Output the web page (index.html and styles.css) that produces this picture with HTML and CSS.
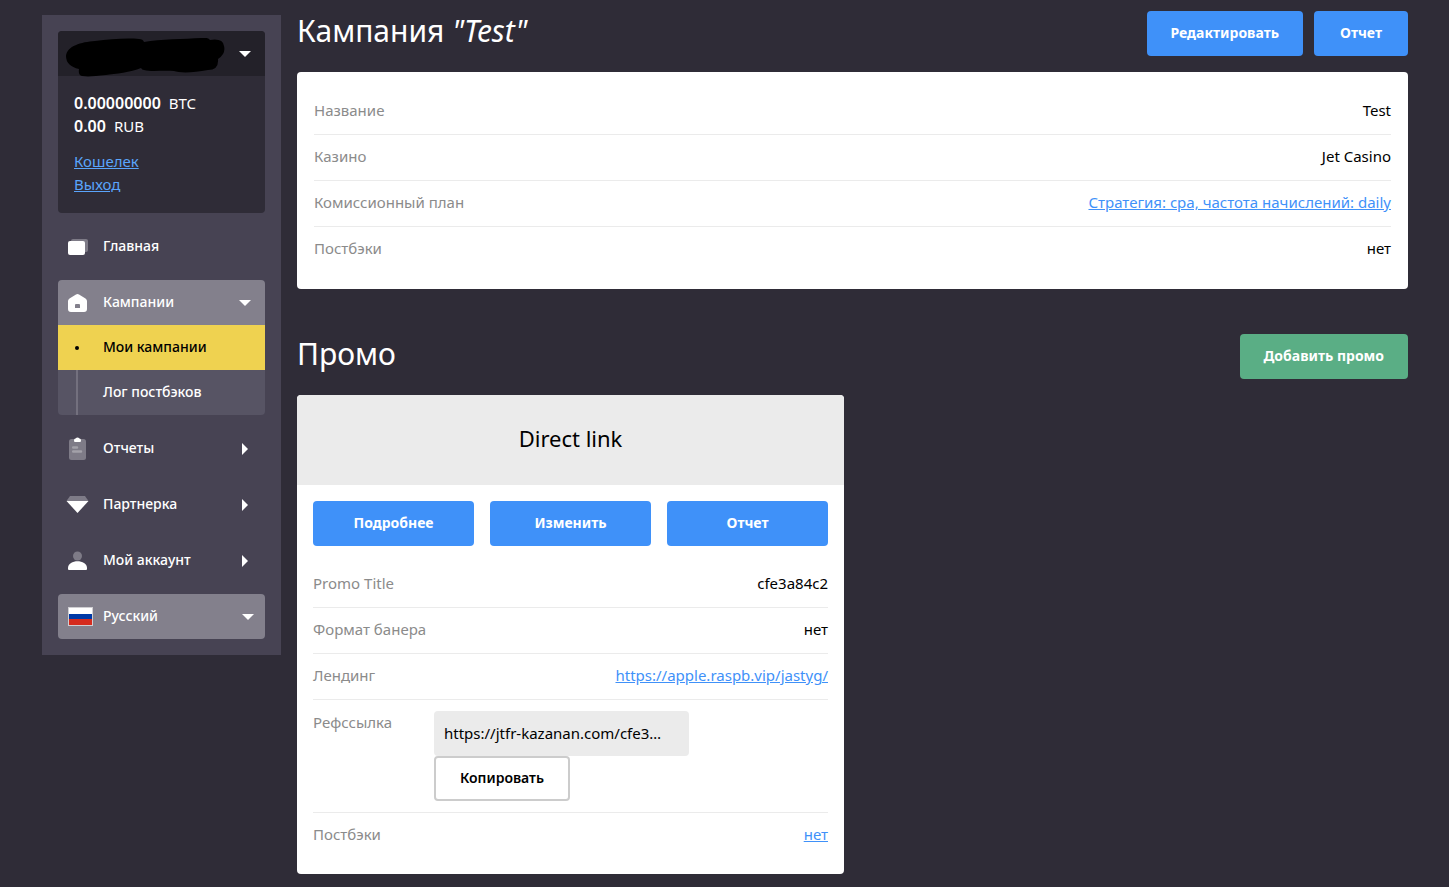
FILE: index.html
```html
<!DOCTYPE html>
<html lang="ru">
<head>
<meta charset="utf-8">
<meta name="viewport" content="width=device-width, initial-scale=1">
<title>Кампания "Test"</title>
<link rel="stylesheet" href="styles.css">
</head>
<body>
<div class="page">
  <aside class="sidebar">
    <section class="account">
      <button class="account-toggle" type="button" aria-label="Аккаунт">
        <svg class="account-mask" width="162" height="40" viewBox="0 0 162 40" aria-hidden="true"><path d="M1 18C2 8 16 4 30 3C45 1 62 0 74 1Q78 1 79 4C95 1 120 1 136 0Q143 -1 145 2Q158 0 159 8Q161 16 153 21Q154 32 143 32C128 35 114 35 109 33C98 32 87 34 79 32Q77 32 76 30C66 34 50 36 41 37C30 38 24 39 17 38Q13 37 14 31Q1 28 1 18Z" fill="#000"/></svg>
        <svg class="caret" width="12" height="6" viewBox="0 0 12 6" aria-hidden="true"><path d="M0 0H12L6 6Z" fill="currentColor"/></svg>
      </button>
      <div class="account-body">
        <p class="balance"><b>0.00000000</b><span>BTC</span></p>
        <p class="balance"><b>0.00</b><span>RUB</span></p>
        <div class="account-links">
          <a href="#wallet">Кошелек</a>
          <a href="#logout">Выход</a>
        </div>
      </div>
    </section>
    <nav class="menu">
      <a class="menu-item" href="#home">
        <svg class="icon" width="24" height="24" viewBox="0 0 24 24" aria-hidden="true"><rect x="5" y="4" width="17" height="13" rx="2" fill="#7e7b87"/><rect x="2" y="6" width="17" height="14" rx="2" fill="#fff"/></svg>
        <span>Главная</span>
      </a>
      <div class="menu-group">
        <button class="menu-item is-open" type="button">
          <svg class="icon" width="24" height="24" viewBox="0 0 24 24" aria-hidden="true"><path fill-rule="evenodd" d="M10 3.600Q11.500 2.600 13 3.600L19.500 7.500Q21 8.500 21 10V18Q21 21 18 21H5Q2 21 2 18V10Q2 8.500 3.500 7.500ZM9 14V17H14V14Q14 13 13 13H10Q9 13 9 14Z" fill="#fff"/></svg>
          <span>Кампании</span>
          <svg class="caret" width="12" height="6" viewBox="0 0 12 6" aria-hidden="true"><path d="M0 0H12L6 6Z" fill="currentColor"/></svg>
        </button>
        <a class="sub-item is-current" href="#campaigns"><span>Мои кампании</span></a>
        <a class="sub-item" href="#log"><span>Лог постбэков</span></a>
      </div>
      <button class="menu-item" type="button">
        <svg class="icon" width="24" height="24" viewBox="0 0 24 24" aria-hidden="true"><rect x="3" y="2" width="17" height="21" rx="2.500" fill="#7e7b87"/><path d="M8 3.500Q8 1.500 9.500 1.500Q11.500 -.5 13.500 1.500Q15 1.500 15 3.500Q15 5 14 5H9Q8 5 8 3.500Z" fill="#fff"/><path d="M7.200 10.500H11M7.200 14.500H15" stroke="#a3a1a9" stroke-width="2.500" stroke-linecap="round"/></svg>
        <span>Отчеты</span>
        <svg class="caret" width="6" height="12" viewBox="0 0 6 12" aria-hidden="true"><path d="M0 0L6 6L0 12Z" fill="currentColor"/></svg>
      </button>
      <button class="menu-item" type="button">
        <svg class="icon" width="24" height="24" viewBox="0 0 24 24" aria-hidden="true"><path d="M4 3H19L22.500 8H.5Z" fill="#7e7b87"/><path d="M.5 8H22.500L11.500 20Z" fill="#fff"/></svg>
        <span>Партнерка</span>
        <svg class="caret" width="6" height="12" viewBox="0 0 6 12" aria-hidden="true"><path d="M0 0L6 6L0 12Z" fill="currentColor"/></svg>
      </button>
      <button class="menu-item" type="button">
        <svg class="icon" width="24" height="24" viewBox="0 0 24 24" aria-hidden="true"><circle cx="11.500" cy="7" r="4.500" fill="#7e7b87"/><path d="M2 20V19C2 10 21 10 21 19V20Q21 21 20 21H3Q2 21 2 20Z" fill="#fff"/></svg>
        <span>Мой аккаунт</span>
        <svg class="caret" width="6" height="12" viewBox="0 0 6 12" aria-hidden="true"><path d="M0 0L6 6L0 12Z" fill="currentColor"/></svg>
      </button>
      <button class="menu-item is-open language" type="button">
        <svg class="flag" width="25" height="19" viewBox="0 0 25 19" aria-hidden="true"><rect width="25" height="19" fill="#cfced2"/><rect x="1" y="1" width="23" height="6" fill="#fff"/><rect x="1" y="7" width="23" height="5" fill="#0039a6"/><rect x="1" y="12" width="23" height="6" fill="#d52b1e"/></svg>
        <span>Русский</span>
        <svg class="caret" width="12" height="6" viewBox="0 0 12 6" aria-hidden="true"><path d="M0 0H12L6 6Z" fill="currentColor"/></svg>
      </button>
    </nav>
  </aside>

  <main class="content">
    <header class="section-head">
      <h1 class="title">Кампания <em>"Test"</em></h1>
      <div class="actions">
        <button class="button" type="button">Редактировать</button>
        <button class="button" type="button">Отчет</button>
      </div>
    </header>
    <dl class="card details">
      <div class="row"><dt>Название</dt><dd>Test</dd></div>
      <div class="row"><dt>Казино</dt><dd>Jet Casino</dd></div>
      <div class="row"><dt>Комиссионный план</dt><dd><a href="#plan">Стратегия: cpa, частота начислений: daily</a></dd></div>
      <div class="row"><dt>Постбэки</dt><dd>нет</dd></div>
    </dl>

    <header class="section-head promo-head">
      <h2 class="title">Промо</h2>
      <button class="button button-green" type="button">Добавить промо</button>
    </header>
    <div class="promo-grid">
      <article class="card">
        <h3 class="promo-title">Direct link</h3>
        <div class="promo-body">
          <div class="promo-actions">
            <button class="button" type="button">Подробнее</button>
            <button class="button" type="button">Изменить</button>
            <button class="button" type="button">Отчет</button>
          </div>
          <dl class="promo-details">
            <div class="row"><dt>Promo Title</dt><dd>cfe3a84c2</dd></div>
            <div class="row"><dt>Формат банера</dt><dd>нет</dd></div>
            <div class="row"><dt>Лендинг</dt><dd><a href="#landing">https://apple.raspb.vip/jastyg/</a></dd></div>
            <div class="row row-ref">
              <dt><label for="ref">Рефссылка</label></dt>
              <dd>
                <input class="ref-link" id="ref" type="text" readonly value="https://jtfr-kazanan.com/cfe3…">
                <button class="button button-outline" type="button">Копировать</button>
              </dd>
            </div>
            <div class="row"><dt>Постбэки</dt><dd><a href="#postbacks">нет</a></dd></div>
          </dl>
        </div>
      </article>
    </div>
  </main>
</div>
</body>
</html>
```
FILE: styles.css
```css
* {
  box-sizing: border-box;
}

body {
  margin: 0;
  background: #2f2c37;
  color: #000;
  font-family: "Noto Sans", "Open Sans", sans-serif;
  font-size: 15px;
  line-height: 23px;
}

h1, h2, h3, p, dl, dd {
  margin: 0;
}

button, input {
  font: inherit;
}

button {
  border: 0;
  cursor: pointer;
}

.page {
  display: grid;
  grid-template-columns: 239px minmax(0, 1fr);
  align-items: start;
  gap: 16px;
  padding: 11px 41px 13px 42px;
}

/* Sidebar */

.sidebar {
  margin-top: 4px;
  padding: 16px;
  background: #474353;
}

.account {
  border-radius: 4px;
  background: #2f2c37;
  color: #fff;
}

.account-toggle {
  position: relative;
  display: flex;
  align-items: center;
  justify-content: flex-end;
  width: 100%;
  height: 45px;
  padding: 0 14px;
  border-radius: 4px 4px 0 0;
  background: #232129;
  color: #fff;
}

.account-mask {
  position: absolute;
  top: 7px;
  left: 7px;
}

.account-body {
  padding: 16px 16px 17px;
}

.balance {
  display: flex;
  gap: 8px;
}

.balance b {
  font-weight: 600;
  font-size: 16px;
}

.account-links {
  display: flex;
  flex-direction: column;
  align-items: flex-start;
  margin-top: 12px;
}

.account-links a {
  color: #5aa5fc;
}

.menu {
  display: flex;
  flex-direction: column;
  gap: 11px;
  margin-top: 11px;
}

.menu-item {
  display: flex;
  align-items: center;
  width: 100%;
  height: 45px;
  padding: 0 14px 0 8px;
  border-radius: 4px;
  background: transparent;
  color: #fff;
  font-size: 14px;
  font-weight: 500;
  text-align: left;
  text-decoration: none;
}

.menu-item span,
.sub-item span {
  padding-bottom: 2px;
}

.menu-item .caret {
  margin-left: auto;
}

.menu-item:not(.is-open) .caret {
  margin-right: 3px;
}

.icon {
  width: 24px;
  margin-right: 13px;
}

.is-open {
  background: #83808c;
}

.menu-group .menu-item {
  border-radius: 4px 4px 0 0;
}

.menu-item.language {
  padding: 0 11px 0 10px;
}

.flag {
  margin-right: 10px;
}

.sub-item {
  display: flex;
  align-items: center;
  height: 45px;
  background: #575464;
  color: #fff;
  font-size: 14px;
  font-weight: 500;
  text-decoration: none;
}

.sub-item::before {
  content: "";
  width: 2px;
  height: 45px;
  margin: 0 25px 0 18px;
  background: #73707e;
}

.sub-item:last-child {
  border-radius: 0 0 4px 4px;
}

.is-current {
  background: #efd250;
  color: #000;
}

.is-current::before {
  width: 4px;
  height: 4px;
  margin: 0 24px 0 17px;
  border-radius: 50%;
  background: #000;
}

/* Content */

.section-head {
  display: flex;
  align-items: flex-start;
  justify-content: space-between;
  min-height: 45px;
  margin-bottom: 16px;
}

.promo-head {
  margin-top: 45px;
}

.title {
  color: #fff;
  font-size: 30px;
  font-weight: 400;
  line-height: 40px;
}

.actions {
  display: flex;
  gap: 11px;
}

.button {
  min-width: 94px;
  height: 45px;
  padding: 0 24px 2px;
  border-radius: 4px;
  background: #3f91f9;
  color: #fff;
  font-size: 14px;
  font-weight: 700;
}

.button-green {
  background: #5aae85;
}

.button-outline {
  border: 2px solid #ccc;
  background: #fff;
  color: #000;
  font-weight: 600;
}

.card {
  overflow: hidden;
  border-radius: 4px;
  background: #fff;
}

.details {
  padding: 17px;
}

.row {
  display: flex;
  justify-content: space-between;
  padding: 10px 0 12px;
  border-bottom: 1px solid #ebebeb;
}

.row:last-child {
  border-bottom: 0;
}

dt {
  color: #8b8b8b;
}

dd a {
  color: #3f91f9;
}

.promo-grid {
  display: grid;
  grid-template-columns: repeat(2, minmax(0, 1fr));
  gap: 17px;
}

.promo-title {
  padding: 26px 16px 30px;
  background: #ebebeb;
  font-size: 22px;
  font-weight: 400;
  line-height: 34px;
  text-align: center;
}

.promo-body {
  padding: 16px;
}

.promo-actions {
  display: grid;
  grid-template-columns: repeat(3, minmax(0, 1fr));
  gap: 16px;
  margin-bottom: 16px;
}

.row-ref {
  justify-content: flex-start;
  padding: 11px 0;
}

.row-ref dt {
  width: 121px;
}

.row-ref dd {
  display: flex;
  flex-direction: column;
  align-items: flex-start;
}

.ref-link {
  width: 255px;
  height: 45px;
  padding: 0 10px 2px;
  border: 0;
  border-radius: 4px;
  background: #ebebeb;
  color: #000;
  text-overflow: ellipsis;
}
```
